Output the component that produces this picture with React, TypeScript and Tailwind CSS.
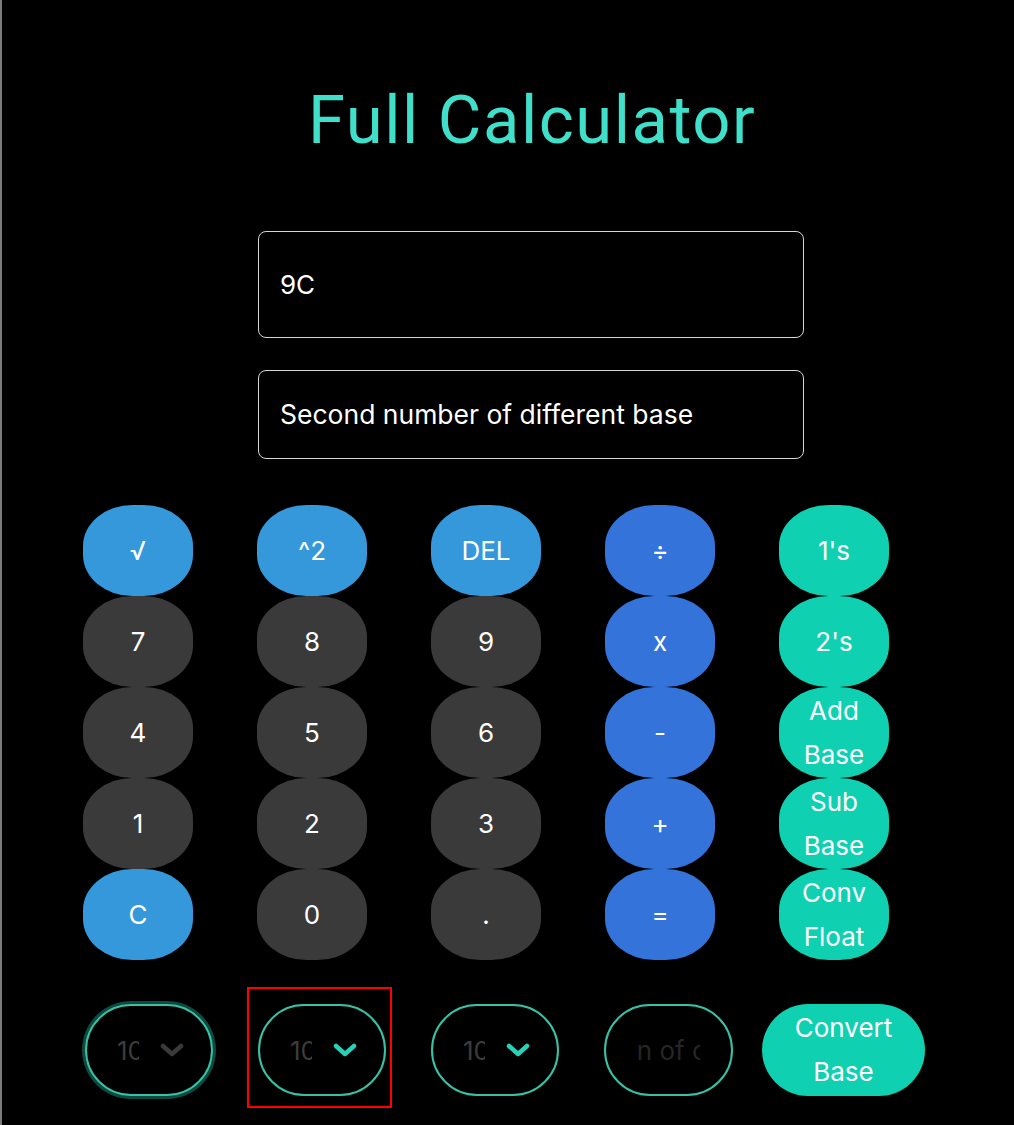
import React from 'react'

const rows: { label: string; kind: 'fn' | 'num' | 'op' | 'base' }[][] = [
  [{ label: '√', kind: 'fn' }, { label: '^2', kind: 'fn' }, { label: 'DEL', kind: 'fn' }, { label: '÷', kind: 'op' }, { label: "1's", kind: 'base' }],
  [{ label: '7', kind: 'num' }, { label: '8', kind: 'num' }, { label: '9', kind: 'num' }, { label: 'x', kind: 'op' }, { label: "2's", kind: 'base' }],
  [{ label: '4', kind: 'num' }, { label: '5', kind: 'num' }, { label: '6', kind: 'num' }, { label: '-', kind: 'op' }, { label: 'Add Base', kind: 'base' }],
  [{ label: '1', kind: 'num' }, { label: '2', kind: 'num' }, { label: '3', kind: 'num' }, { label: '+', kind: 'op' }, { label: 'Sub Base', kind: 'base' }],
  [{ label: 'C', kind: 'fn' }, { label: '0', kind: 'num' }, { label: '.', kind: 'num' }, { label: '=', kind: 'op' }, { label: 'Conv Float', kind: 'base' }],
]

const kindCls = {
  fn: 'bg-[#3498db]',
  num: 'bg-[#3a3a3a]',
  op: 'bg-[#3373da]',
  base: 'bg-[#0fd0b0]',
}

function Chevron({ color }: { color: string }) {
  return (
    <svg width="24" height="14" viewBox="0 0 24 14" fill="none">
      <path d="M3 3 L12 11 L21 3" stroke={color} strokeWidth="4.5" strokeLinecap="round" strokeLinejoin="round" />
    </svg>
  )
}

function BaseSelect({ focused, chevron }: { focused?: boolean; chevron: string }) {
  return (
    <div className={`flex h-[92px] w-[128px] items-center rounded-full border-2 border-[#37c2a6] pl-[30px] ${focused ? 'ring-[3px] ring-[#0f4a40]' : ''}`}>
      <span className="w-[22px] overflow-hidden whitespace-nowrap text-[26px] text-[#3c3c3c]">10</span>
      <span className="ml-[21px] flex items-center"><Chevron color={chevron} /></span>
    </div>
  )
}

export default function App() {
  return (
    <div className="min-h-screen bg-black border-l-2 border-[#7c7c7c] font-['Inter',sans-serif] text-white">
      <h1 className="ml-[256px] w-[548px] pt-[87px] text-center font-['Roboto',sans-serif] text-[67px] font-normal leading-none tracking-[1.5px] text-[#40dfca]">
        Full Calculator
      </h1>

      <div className="ml-[256px] mt-[77px] w-[546px] space-y-[32px]">
        <div className="flex h-[107px] items-center rounded-lg border-[1.5px] border-[#d6d6d6] px-[21px] text-[26px]">9C</div>
        <div className="flex h-[89px] items-center rounded-lg border-[1.5px] border-[#d6d6d6] px-[21px] text-[26.5px]">Second number of different base</div>
      </div>

      <div className="ml-[81px] mt-[46px] grid grid-cols-[repeat(5,110px)] gap-x-[64px]">
        {rows.flat().map((b, i) => (
          <button
            key={i}
            className={`flex h-[91px] w-[110px] items-center justify-center rounded-[45%] px-[12px] text-center text-[26px] leading-[44px] text-white ${kindCls[b.kind]}`}
          >
            {b.label}
          </button>
        ))}
      </div>

      <div className="mt-[44px] flex items-center">
        <div className="ml-[83px]"><BaseSelect focused chevron="#3a3a3a" /></div>
        <div className="relative ml-[45px]">
          <BaseSelect chevron="#27d3b8" />
          <div className="pointer-events-none absolute -left-[11px] -right-[6px] -top-[17px] -bottom-[12px] border-2 border-[#ff0000]" />
        </div>
        <div className="ml-[45px]"><BaseSelect chevron="#27d3b8" /></div>
        <div className="ml-[45px] flex h-[92px] w-[129px] items-center justify-center rounded-full border-2 border-[#37c2a6]">
          <div className="flex w-[62px] justify-center overflow-hidden">
            <span className="whitespace-nowrap text-[26px] text-[#262626]">Position of comma</span>
          </div>
        </div>
        <button className="ml-[29px] flex h-[92px] w-[163px] items-center justify-center rounded-full bg-[#0fd0b0] px-[16px] text-center text-[26px] leading-[44px] text-white">
          Convert Base
        </button>
      </div>
    </div>
  )
}
